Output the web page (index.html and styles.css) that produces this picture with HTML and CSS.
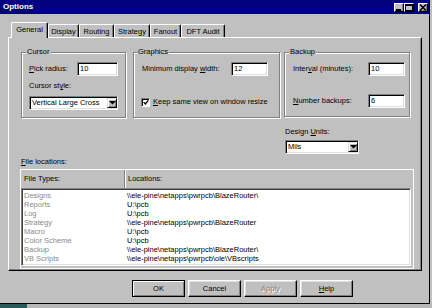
FILE: index.html
```html
<!DOCTYPE html>
<html>
<head>
<meta charset="utf-8">
<title>Options</title>
<link rel="stylesheet" href="styles.css">
</head>
<body>
<div class="screen">
  <div class="window">
    <div class="titlebar">
      <span class="title">Options</span>
      <div class="tb-buttons">
        <span class="tb-btn"><svg width="8" height="7" viewBox="0 0 8 7"><rect x="1" y="5" width="5" height="2" fill="#000"/></svg></span>
        <span class="tb-btn"><svg width="8" height="7" viewBox="0 0 8 7"><rect x="0.5" y="0.5" width="7" height="6" fill="none" stroke="#000"/><rect x="0" y="0" width="8" height="2" fill="#000"/></svg></span>
        <span class="tb-btn close"><svg width="8" height="7" viewBox="0 0 8 7"><path d="M1 0.5 L7 6.5 M7 0.5 L1 6.5" stroke="#000" stroke-width="1.5"/></svg></span>
      </div>
    </div>
    <div class="content">
      <div class="tabs">
        <div class="tab active t-general">General</div>
        <div class="tab t-display">Display</div>
        <div class="tab t-routing">Routing</div>
        <div class="tab t-strategy">Strategy</div>
        <div class="tab t-fanout">Fanout</div>
        <div class="tab t-dft">DFT Audit</div>
      </div>
      <div class="panel">
        <div class="groups">
          <div class="group g-cursor">
            <span class="group-title">Cursor</span>
            <div class="row first">
              <span class="lbl lw-pick"><u>P</u>ick radius:</span>
              <span class="input iw-41">10</span>
            </div>
            <div class="lbl stack">Cursor st<u>y</u>le:</div>
            <div class="select sw-89 stack"><span class="sel-text">Vertical Large Cross</span><span class="drop"><svg width="7" height="4" viewBox="0 0 7 4"><polygon points="0,0 7,0 3.5,3.5" fill="#000"/></svg></span></div>
          </div>
          <div class="group g-graphics">
            <span class="group-title">Graphics</span>
            <div class="row first">
              <span class="lbl lw-min">Minimum display <u>w</u>idth:</span>
              <span class="input iw-37">12</span>
            </div>
            <div class="check-row">
              <span class="checkbox"><svg width="7" height="7" viewBox="0 0 7 7"><polyline points="0.8,3 2.8,5.2 6.2,1" fill="none" stroke="#000" stroke-width="1.5"/></svg></span>
              <span class="lbl"><u>K</u>eep same view on window resize</span>
            </div>
          </div>
          <div class="group g-backup">
            <span class="group-title">Backup</span>
            <div class="row first">
              <span class="lbl lw-int">Inter<u>v</u>al (minutes):</span>
              <span class="input iw-37">10</span>
            </div>
            <div class="row second">
              <span class="lbl lw-int"><u>N</u>umber backups:</span>
              <span class="input iw-37">6</span>
            </div>
          </div>
        </div>
        <div class="units">
          <span class="lbl">Design <u>U</u>nits:</span>
          <div class="select sw-74 unit-sel"><span class="sel-text">Mils</span><span class="drop"><svg width="7" height="4" viewBox="0 0 7 4"><polygon points="0,0 7,0 3.5,3.5" fill="#000"/></svg></span></div>
        </div>
        <div class="lbl files-label"><u>F</u>ile locations:</div>
        <div class="frame">
          <div class="header">
            <div class="hcol h1">File Types:</div>
            <div class="hcol h2">Locations:</div>
          </div>
          <div class="list">
            <div class="lrow"><span class="c1">Designs</span><span class="c2">\\ele-pine\netapps\pwrpcb\BlazeRouter\</span></div>
            <div class="lrow"><span class="c1">Reports</span><span class="c2">U:\pcb</span></div>
            <div class="lrow"><span class="c1">Log</span><span class="c2">U:\pcb</span></div>
            <div class="lrow"><span class="c1">Strategy</span><span class="c2">\\ele-pine\netapps\pwrpcb\BlazeRouter</span></div>
            <div class="lrow"><span class="c1">Macro</span><span class="c2">U:\pcb</span></div>
            <div class="lrow"><span class="c1">Color Scheme</span><span class="c2">U:\pcb</span></div>
            <div class="lrow"><span class="c1">Backup</span><span class="c2">\\ele-pine\netapps\pwrpcb\BlazeRouter\</span></div>
            <div class="lrow"><span class="c1">VB Scripts</span><span class="c2">\\ele-pine\netapps\pwrpcb\ole\VBscripts</span></div>
          </div>
        </div>
      </div>
      <div class="buttons">
        <span class="btn default">OK</span>
        <span class="btn">Cancel</span>
        <span class="btn disabled">Apply</span>
        <span class="btn"><u>H</u>elp</span>
      </div>
    </div>
  </div>
  <div class="below">
    <span class="b-teal"></span>
    <span class="b-rest"></span>
  </div>
</div>
</body>
</html>
```
FILE: styles.css
```css
* { box-sizing: border-box; }
html, body { margin: 0; padding: 0; }
body {
  width: 432px;
  height: 308px;
  overflow: hidden;
  background: #c0c0c0;
  font-family: "Liberation Sans", Arial, sans-serif;
  font-size: 7.5px;
  line-height: 10px;
  color: #000;
}
u { text-decoration-thickness: 1px; text-underline-offset: 1px; }

.screen { display: flex; flex-direction: column; width: 432px; height: 308px; }

.window {
  width: 430px;
  height: 304px;
  flex: none;
  display: flex;
  flex-direction: column;
  background: #c0c0c0;
  border-right: 1px solid #000;
  border-bottom: 1px solid #000;
}

/* title bar */
.titlebar {
  flex: none;
  height: 14px;
  background: #000080;
  color: #fff;
  display: flex;
  align-items: center;
  padding-left: 3px;
}
.title { flex: 1; font-weight: bold; font-size: 8px; }
.tb-buttons { display: flex; margin-right: 1px; }
.tb-btn {
  width: 10px;
  height: 9px;
  margin-left: 0;
  background: #c0c0c0;
  border: 1px solid;
  border-color: #fff #000 #000 #fff;
  box-shadow: inset -1px -1px #808080;
  display: flex;
  align-items: flex-start;
  justify-content: flex-start;
}
.tb-btn svg { display: block; }
.tb-btn.close { margin-left: 4px; }

/* content */
.content {
  flex: 1;
  display: flex;
  flex-direction: column;
  padding: 8px 0 0 8px;
}

/* tabs */
.tabs {
  display: flex;
  align-items: flex-end;
  height: 15px;
  margin-left: 3px;
}
.tab {
  height: 13px;
  border-left: 1px solid #fff;
  border-top: 1px solid #fff;
  border-right: 1px solid #000;
  box-shadow: inset -1px 0 #808080;
  border-radius: 2px 2px 0 0;
  display: flex;
  align-items: center;
  justify-content: center;
  padding-top: 1px;
  background: #c0c0c0;
}
.tab.active {
  height: 16px;
  margin-bottom: -1px;
  padding-top: 0;
  padding-bottom: 1px;
  position: relative;
  z-index: 2;
}
.t-general { width: 37px; }
.t-display { width: 31px; }
.t-routing { width: 35px; }
.t-strategy { width: 36px; }
.t-fanout { width: 31px; }
.t-dft { width: 44px; }

/* panel */
.panel {
  width: 414px;
  height: 234px;
  flex: none;
  border: 1px solid;
  border-color: #fff #000 #000 #fff;
  box-shadow: inset -1px -1px #808080;
  padding: 14px 0 0 12px;
  display: flex;
  flex-direction: column;
  align-items: flex-start;
}

.groups { display: flex; align-items: flex-start; }
.group {
  border: 1px solid #808080;
  box-shadow: inset 1px 1px #fff, 1px 1px #fff;
  display: flex;
  flex-direction: column;
  align-items: flex-start;
}
.group-title {
  margin-top: -6px;
  background: #c0c0c0;
  padding: 0 1px;
  line-height: 10px;
}
.g-cursor { width: 105px; height: 66px; margin-right: 7px; padding-left: 7px; }
.g-cursor .group-title { margin-left: -3px; }
.g-graphics { width: 147px; height: 66px; margin-right: 4px; padding-left: 8px; }
.g-graphics .group-title { margin-left: -5px; }
.g-backup { width: 126px; height: 65px; padding-left: 8px; }
.g-backup .group-title { margin-left: -4px; }

.row { display: flex; align-items: center; height: 14px; }
.row.first { margin-top: 5px; }
.row.second { margin-top: 18px; }
.stack { margin-top: 5px; }

.lbl { line-height: 10px; white-space: nowrap; }
.lw-pick { width: 48px; }
.lw-min { width: 89px; }
.lw-int { width: 75px; }

.input {
  height: 14px;
  background: #fff;
  border: 1px solid;
  border-color: #808080 #fff #fff #808080;
  box-shadow: inset 1px 1px #000, inset -1px -1px #dfdfdf;
  padding-left: 2px;
  display: flex;
  align-items: center;
}
.iw-41 { width: 41px; }
.iw-37 { width: 37px; }

.select {
  height: 14px;
  background: #fff;
  border: 1px solid;
  border-color: #808080 #fff #fff #808080;
  box-shadow: inset 1px 1px #000, inset -1px -1px #dfdfdf;
  padding-left: 2px;
  display: flex;
  align-items: center;
}
.sw-89 { width: 89px; }
.sw-74 { width: 74px; }
.sel-text { flex: 1; white-space: nowrap; }
.drop {
  width: 10px;
  height: 10px;
  background: #c0c0c0;
  border: 1px solid;
  border-color: #dfdfdf #000 #000 #dfdfdf;
  box-shadow: inset 1px 1px #fff, inset -1px -1px #808080;
  display: flex;
  align-items: center;
  justify-content: center;
}
.drop svg { display: block; }

.check-row { display: flex; align-items: center; height: 10px; margin-top: 21px; }
.checkbox {
  width: 9px;
  height: 9px;
  margin-left: -1px;
  margin-right: 3px;
  background: #fff;
  border: 1px solid;
  border-color: #808080 #fff #fff #808080;
  box-shadow: inset 1px 1px #000;
  display: flex;
  align-items: center;
  justify-content: center;
  padding: 1px 0 0 1px;
}
.checkbox svg { display: block; }

.units {
  display: flex;
  flex-direction: column;
  align-items: flex-start;
  margin: 9px 0 0 264px;
}
.unit-sel { margin-top: 3px; }

.files-label { margin-top: 3px; }

.frame {
  margin: 2px 0 0 -1px;
  width: 394px;
  height: 100px;
  border: 1px solid #fff;
  padding: 0 2px 2px 0;
  display: flex;
  flex-direction: column;
}
.header { display: flex; height: 18px; flex: none; }
.hcol { display: flex; align-items: center; padding-bottom: 1px; line-height: 10px; }
.h1 { width: 104px; padding-left: 3px; border-right: 1px solid #808080; box-shadow: 1px 0 #fff; }
.h2 { flex: 1; padding-left: 3px; }

.list {
  width: 390px;
  height: 78px;
  flex: none;
  background: #fff;
  border: 1px solid;
  border-color: #808080 #fff #fff #808080;
  box-shadow: inset 1px 1px #404040, inset -1px -1px #dfdfdf;
  padding: 2px 0 0 1px;
  display: flex;
  flex-direction: column;
}
.lrow { display: flex; line-height: 9px; height: 9px; white-space: nowrap; }
.c1 { width: 104px; padding-left: 1px; color: #8a8a8a; }
.c2 { flex: 1; }

/* buttons */
.buttons {
  display: flex;
  gap: 3px;
  margin: 9px 0 0 124px;
}
.btn {
  width: 53px;
  height: 17px;
  border: 1px solid;
  border-color: #fff #000 #000 #fff;
  box-shadow: inset -1px -1px #808080, inset 1px 1px #dfdfdf;
  display: flex;
  align-items: center;
  justify-content: center;
}
.btn.default {
  border-color: #000;
  box-shadow: inset 1px 1px #fff, inset -1px -1px #808080;
}
.btn.disabled { color: #808080; text-shadow: 1px 1px #fff; }

/* strip below the window */
.below { display: flex; height: 4px; flex: none; }
.b-teal { width: 27px; background: #2a5a5a; }
.b-rest { flex: 1; background: #b8b8b8; }
```
